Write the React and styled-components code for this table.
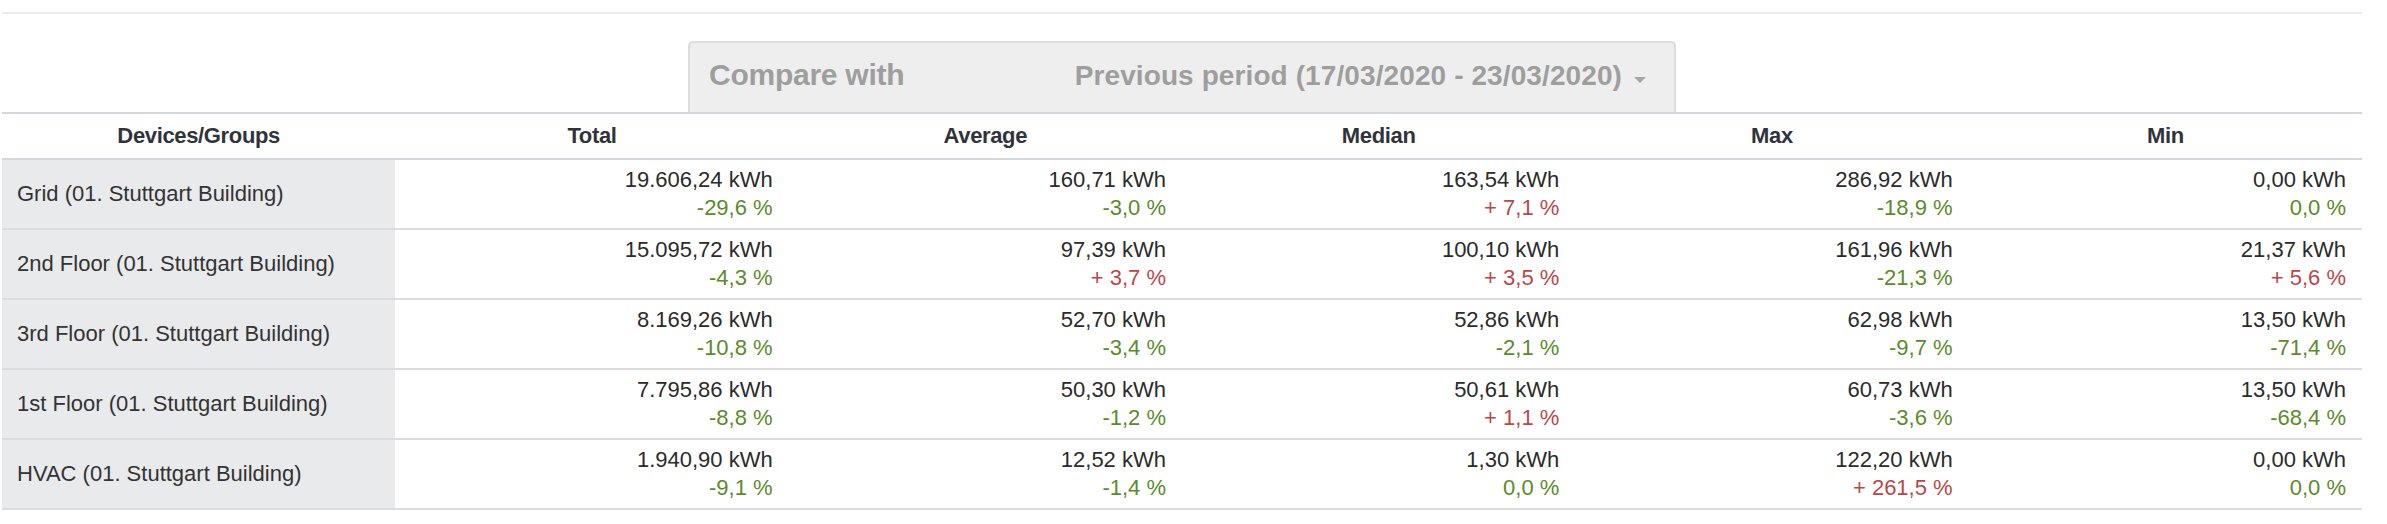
import React from "react";
import styled, {createGlobalStyle} from "styled-components";

const GlobalStyle = createGlobalStyle`
    body{
        margin: 0;
        background: #fff;
        font-family: "Liberation Sans", Arial, sans-serif;
        color: #2b2b2b;
    }
`;

const Page = styled.div`
    padding: 12px 25px 14px 2px;
`;

const TopRule = styled.div`
    height: 2px;
    background-color: #ececec;
`;

const CompareBox = styled.div`
    box-sizing: border-box;
    width: 988px;
    height: 71px;
    margin: 27px auto 0;
    padding: 14px 28px 0 19px;
    display: flex;
    align-items: baseline;
    justify-content: space-between;
    background-color: #eeeeee;
    border: 2px solid #dddddd;
    border-bottom: none;
    border-radius: 5px 5px 0 0;
    color: #9e9e9e;
    font-weight: bold;
    user-select: none;
`;

const CompareLabel = styled.span`
    font-size: 30px;
    line-height: 36px;
    letter-spacing: -0.25px;
`;

const PeriodSelect = styled.span`
    font-size: 28px;
    line-height: 36px;
    letter-spacing: 0.1px;
    cursor: pointer;

    >svg{
        margin-left: 12px;
        vertical-align: 2px;
    }
`;

const Table = styled.table`
    width: 100%;
    table-layout: fixed;
    border-collapse: separate;
    border-spacing: 0;
    font-size: 22px;
    line-height: 28px;
`;

const HeadCell = styled.th`
    padding: 8px 15px;
    text-align: center;
    font-weight: bold;
    letter-spacing: -0.35px;
    color: #30343a;
    border-top: 2px solid #d3d6da;
    border-bottom: 2px solid #d3d6da;
`;

const NameCell = styled.td`
    padding: 6px 15px;
    text-align: left;
    vertical-align: middle;
    background-color: #e9eaec;
    color: #333;
    border-bottom: 2px solid #dcdcdc;
    white-space: nowrap;
`;

const ValueCell = styled.td`
    padding: 6px 16px;
    text-align: right;
    vertical-align: middle;
    border-bottom: 2px solid #dcdcdc;
    white-space: nowrap;

    >div{
        display: block;
    }
`;

const Change = styled.div`
    color: ${p=>p.up ? '#b9474a' : '#5b8b2b'};
`;

const columns = ['Total', 'Average', 'Median', 'Max', 'Min'];

const rows = [
    {name: 'Grid (01. Stuttgart Building)', cells: [
        ['19.606,24', '-29,6'], ['160,71', '-3,0'], ['163,54', '+ 7,1'], ['286,92', '-18,9'], ['0,00', '0,0']
    ]},
    {name: '2nd Floor (01. Stuttgart Building)', cells: [
        ['15.095,72', '-4,3'], ['97,39', '+ 3,7'], ['100,10', '+ 3,5'], ['161,96', '-21,3'], ['21,37', '+ 5,6']
    ]},
    {name: '3rd Floor (01. Stuttgart Building)', cells: [
        ['8.169,26', '-10,8'], ['52,70', '-3,4'], ['52,86', '-2,1'], ['62,98', '-9,7'], ['13,50', '-71,4']
    ]},
    {name: '1st Floor (01. Stuttgart Building)', cells: [
        ['7.795,86', '-8,8'], ['50,30', '-1,2'], ['50,61', '+ 1,1'], ['60,73', '-3,6'], ['13,50', '-68,4']
    ]},
    {name: 'HVAC (01. Stuttgart Building)', cells: [
        ['1.940,90', '-9,1'], ['12,52', '-1,4'], ['1,30', '0,0'], ['122,20', '+ 261,5'], ['0,00', '0,0']
    ]},
];

function Caret(){
    return <svg width="12" height="6" viewBox="0 0 12 6">
        <path d="M0 0 L12 0 L6 6 Z" fill="#a6a6a6"/>
    </svg>
}

export default function App(){
    return <Page>
        <GlobalStyle/>
        <TopRule/>
        <CompareBox>
            <CompareLabel>Compare with</CompareLabel>
            <PeriodSelect>
                Previous period (17/03/2020 - 23/03/2020)
                <Caret/>
            </PeriodSelect>
        </CompareBox>
        <Table>
            <thead>
                <tr>
                    <HeadCell>Devices/Groups</HeadCell>
                    {columns.map(c=><HeadCell key={c}>{c}</HeadCell>)}
                </tr>
            </thead>
            <tbody>
                {rows.map(r=>(
                    <tr key={r.name}>
                        <NameCell>{r.name}</NameCell>
                        {r.cells.map(([value, pct], i)=>(
                            <ValueCell key={i}>
                                <div>{value} kWh</div>
                                <Change up={pct.startsWith('+')}>{pct} %</Change>
                            </ValueCell>
                        ))}
                    </tr>
                ))}
            </tbody>
        </Table>
    </Page>
}
